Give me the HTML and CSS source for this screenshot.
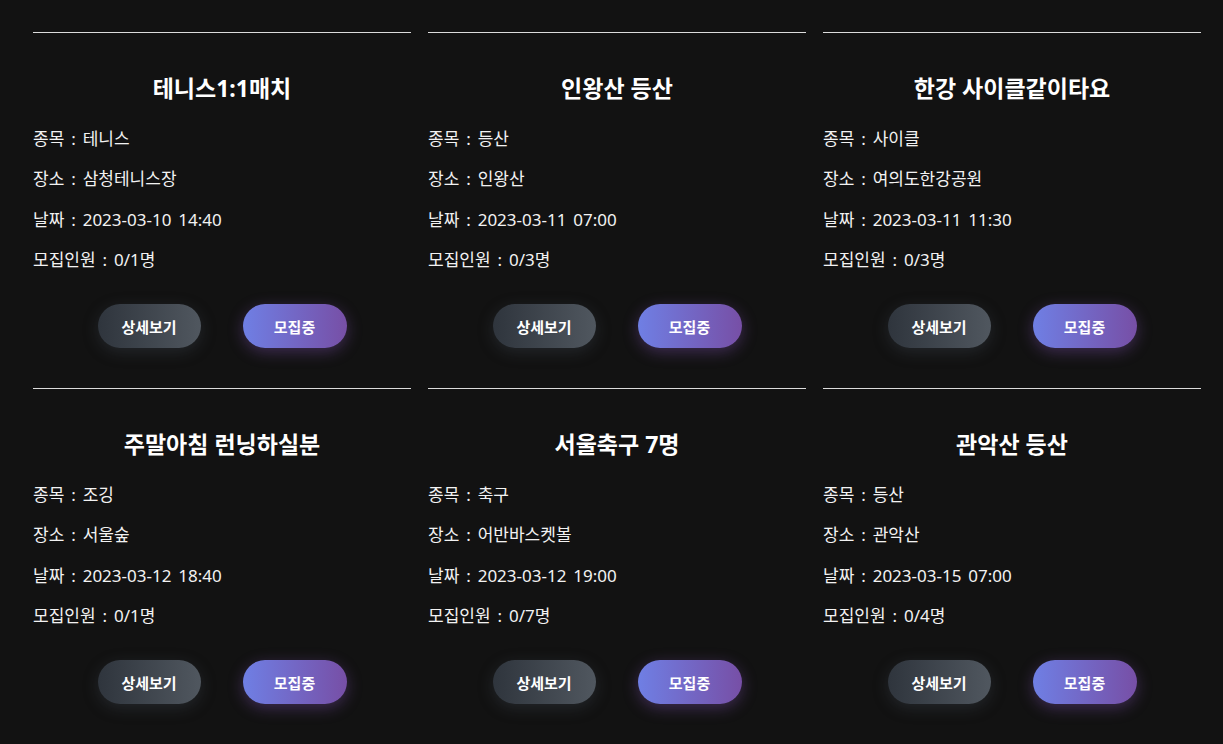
FILE: index.html
```html
<!DOCTYPE html>
<html lang="ko">
<head>
<meta charset="utf-8">
<link rel="stylesheet" href="styles.css">
</head>
<body>
<div class="grid">
  <div class="card">
    <h2 class="title">테니스1:1매치</h2>
    <div class="info">
      <p>종목 : 테니스</p>
      <p>장소 : 삼청테니스장</p>
      <p>날짜 : 2023-03-10 14:40</p>
      <p>모집인원 : 0/1명</p>
    </div>
    <div class="actions"><button class="btn btn-dark">상세보기</button><button class="btn btn-purple">모집중</button></div>
  </div>
  <div class="card">
    <h2 class="title">인왕산 등산</h2>
    <div class="info">
      <p>종목 : 등산</p>
      <p>장소 : 인왕산</p>
      <p>날짜 : 2023-03-11 07:00</p>
      <p>모집인원 : 0/3명</p>
    </div>
    <div class="actions"><button class="btn btn-dark">상세보기</button><button class="btn btn-purple">모집중</button></div>
  </div>
  <div class="card">
    <h2 class="title">한강 사이클같이타요</h2>
    <div class="info">
      <p>종목 : 사이클</p>
      <p>장소 : 여의도한강공원</p>
      <p>날짜 : 2023-03-11 11:30</p>
      <p>모집인원 : 0/3명</p>
    </div>
    <div class="actions"><button class="btn btn-dark">상세보기</button><button class="btn btn-purple">모집중</button></div>
  </div>
  <div class="card">
    <h2 class="title">주말아침 런닝하실분</h2>
    <div class="info">
      <p>종목 : 조깅</p>
      <p>장소 : 서울숲</p>
      <p>날짜 : 2023-03-12 18:40</p>
      <p>모집인원 : 0/1명</p>
    </div>
    <div class="actions"><button class="btn btn-dark">상세보기</button><button class="btn btn-purple">모집중</button></div>
  </div>
  <div class="card">
    <h2 class="title">서울축구 7명</h2>
    <div class="info">
      <p>종목 : 축구</p>
      <p>장소 : 어반바스켓볼</p>
      <p>날짜 : 2023-03-12 19:00</p>
      <p>모집인원 : 0/7명</p>
    </div>
    <div class="actions"><button class="btn btn-dark">상세보기</button><button class="btn btn-purple">모집중</button></div>
  </div>
  <div class="card">
    <h2 class="title">관악산 등산</h2>
    <div class="info">
      <p>종목 : 등산</p>
      <p>장소 : 관악산</p>
      <p>날짜 : 2023-03-15 07:00</p>
      <p>모집인원 : 0/4명</p>
    </div>
    <div class="actions"><button class="btn btn-dark">상세보기</button><button class="btn btn-purple">모집중</button></div>
  </div>
</div>
</body>
</html>
```
FILE: styles.css
```css
html, body {
  margin: 0;
  padding: 0;
  background: #121212;
  color: #f2f2f2;
  font-family: "Noto Sans", "Noto Sans CJK KR", sans-serif;
}
.grid {
  display: grid;
  grid-template-columns: repeat(3, 378px);
  column-gap: 17px;
  padding: 32px 22px 0 33px;
}
.card {
  border-top: 1px solid #dcdcdc;
  padding: 40px 0 40px;
  display: flex;
  flex-direction: column;
}
.title {
  margin: 0;
  font-size: 23px;
  line-height: 31px;
  font-weight: 700;
  text-align: center;
  color: #fff;
}
.info {
  margin-top: 22.5px;
  display: flex;
  flex-direction: column;
  gap: 16.5px;
}
.info p {
  margin: 0;
  font-size: 17px;
  line-height: 24px;
  word-spacing: 2.5px;
}
.actions {
  margin-top: 32px;
  display: flex;
  justify-content: center;
  gap: 42px;
}
.btn {
  height: 44px;
  border: none;
  border-radius: 22px;
  color: #fff;
  font-family: "Noto Sans", "Noto Sans CJK KR", sans-serif;
  font-size: 15px;
  font-weight: 700;
  padding: 0;
  cursor: pointer;
}
.btn-dark {
  width: 103px;
  background: linear-gradient(90deg, #2f353d, #50575f);
  box-shadow: 0 4px 15px rgba(70, 78, 90, 0.35);
}
.btn-purple {
  width: 104px;
  background: linear-gradient(90deg, #6f7fe4, #774fa6);
  box-shadow: 0 4px 15px rgba(118, 75, 162, 0.45);
}
```
